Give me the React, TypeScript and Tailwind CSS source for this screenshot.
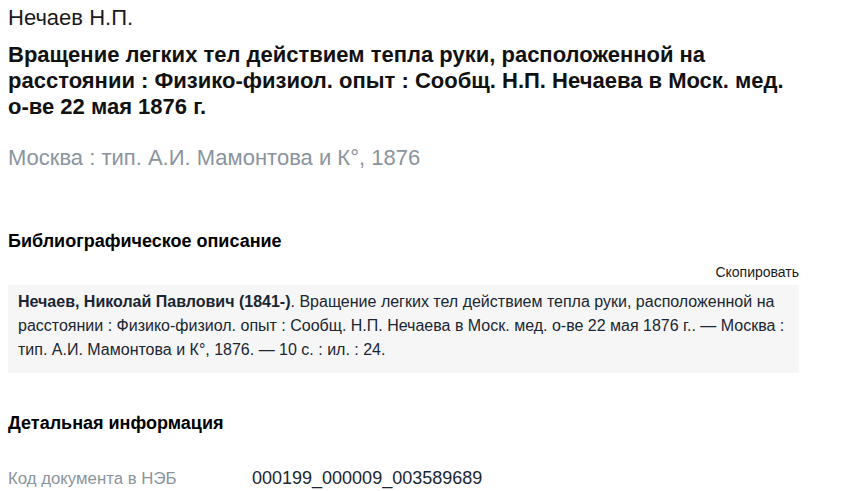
import React from 'react';

// ================================
// Record Card
// ================================

const DetailRow: React.FC<{ label: string; value: string }> = ({ label, value }) => (
  <div className="flex items-baseline">
    <div className="w-[244px] shrink-0 text-[16.8px] text-[#8a949e]">{label}</div>
    <div className="text-[18px] text-[#1a2633]">{value}</div>
  </div>
);

export default function App() {
  return (
    <div className="bg-white min-h-screen font-['Liberation_Sans',Arial,sans-serif] text-black">
      <div className="w-[791px] ml-2 pt-[5px]">
        {/* Author */}
        <div className="text-[22px] leading-[26px] text-[#1a1a1a]">Нечаев Н.П.</div>

        {/* Title */}
        <h1 className="mt-[11px] text-[22px] leading-[26px] font-bold text-[#111]">
          Вращение легких тел действием тепла руки, расположенной на расстоянии : Физико-физиол. опыт : Сообщ. Н.П. Нечаева в Моск. мед.{' '}
          <span className="whitespace-nowrap">о-ве</span> 22 мая 1876 г.
        </h1>

        {/* Imprint */}
        <div className="mt-[25px] text-[22px] leading-[26px] text-[#8a949e]">
          Москва : тип. А.И. Мамонтова и К°, 1876
        </div>

        {/* Bibliographic description */}
        <h2 className="mt-[59px] text-[18px] leading-[22px] font-bold">Библиографическое описание</h2>
        <div className="mt-[12px] flex justify-end">
          <button className="text-[14px] leading-[16px] text-[#1a1a1a]">Скопировать</button>
        </div>
        <div className="mt-[5px] bg-[#f6f6f6] px-[10px] pt-[5px] pb-[11px] text-[16px] leading-[24px] text-[#1a2633]">
          <span className="font-bold">Нечаев, Николай Павлович (1841-)</span>. Вращение легких тел действием тепла руки, расположенной на расстоянии : Физико-физиол. опыт : Сообщ. Н.П. Нечаева в Моск. мед. о-ве 22 мая 1876 г.. — Москва : тип. А.И. Мамонтова и К°, 1876. — 10 с. : ил. : 24.
        </div>

        {/* Details */}
        <h2 className="mt-[39px] text-[18px] leading-[22px] font-bold">Детальная информация</h2>
        <div className="mt-[34px] leading-[20px]">
          <DetailRow label="Код документа в НЭБ" value="000199_000009_003589689" />
        </div>
      </div>
    </div>
  );
}
